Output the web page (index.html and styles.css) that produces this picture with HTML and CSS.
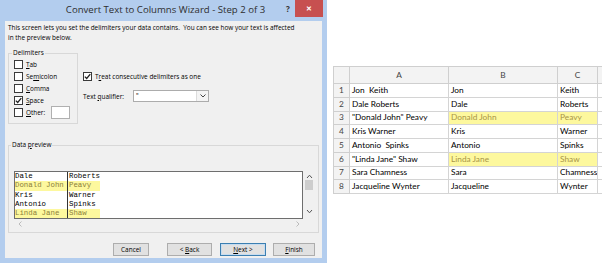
FILE: index.html
```html
<!DOCTYPE html>
<html lang="en">
  <head>
    <meta charset="UTF-8" />
    <title>Convert Text to Columns Wizard</title>
    <link rel="stylesheet" href="styles.css">
  </head>
  <body>
    <div class="page">
      <div class="dialog">
        <div class="titlebar">
          <span class="title">Convert Text to Columns Wizard - Step 2 of 3</span>
          <span class="help">?</span>
          <span class="close">&#x2715;</span>
        </div>

        <div class="body">
          <p class="intro">This screen lets you set the delimiters your data contains.&nbsp; You can see how your text is affected<br>in the preview below.</p>

          <div class="options">
            <fieldset class="delims">
              <legend>Delimiters</legend>
              <label class="check"><span class="box"></span><span><u>T</u>ab</span></label>
              <label class="check"><span class="box"></span><span>Se<u>m</u>icolon</span></label>
              <label class="check"><span class="box"></span><span><u>C</u>omma</span></label>
              <label class="check">
                <span class="box">
                  <svg width="7" height="7" viewBox="0 0 7 7"><path d="M0.8 3.6 L2.7 5.5 L6.3 1.2" fill="none" stroke="#222" stroke-width="1.3"/></svg>
                </span>
                <span><u>S</u>pace</span>
              </label>
              <label class="check other"><span class="box"></span><span><u>O</u>ther:</span><span class="other-input"></span></label>
            </fieldset>

            <div class="more">
              <label class="check">
                <span class="box">
                  <svg width="7" height="7" viewBox="0 0 7 7"><path d="M0.8 3.6 L2.7 5.5 L6.3 1.2" fill="none" stroke="#222" stroke-width="1.3"/></svg>
                </span>
                <span>T<u>r</u>eat consecutive delimiters as one</span>
              </label>
              <div class="qualifier">
                <span class="qual-label">Text <u>q</u>ualifier:</span>
                <div class="select">
                  <span class="select-value">"</span>
                  <span class="select-arrow">
                    <svg width="6" height="4" viewBox="0 0 6 4"><path d="M0.5 0.5 L3 3 L5.5 0.5" fill="none" stroke="#444" stroke-width="1"/></svg>
                  </span>
                </div>
              </div>
            </div>
          </div>

          <fieldset class="preview-group">
            <legend>Data <u>p</u>review</legend>
            <div class="preview">
              <div class="data">
                <div class="prow"><span class="c1">Dale</span><span class="c2">Roberts</span></div>
                <div class="prow hl"><span class="c1">Donald John</span><span class="c2">Peavy</span></div>
                <div class="prow"><span class="c1">Kris</span><span class="c2">Warner</span></div>
                <div class="prow"><span class="c1">Antonio</span><span class="c2">Spinks</span></div>
                <div class="prow hl"><span class="c1">Linda Jane</span><span class="c2">Shaw</span></div>
              </div>
              <div class="vscroll">
                <svg width="7" height="5" viewBox="0 0 7 5"><path d="M1 4 L3.5 1.2 L6 4" fill="none" stroke="#555" stroke-width="1"/></svg>
                <span class="thumb"></span>
                <svg width="7" height="5" viewBox="0 0 7 5"><path d="M1 1 L3.5 3.8 L6 1" fill="none" stroke="#555" stroke-width="1"/></svg>
              </div>
              <div class="hscroll">
                <svg width="4" height="6" viewBox="0 0 4 6"><path d="M3.5 0.5 L1 3 L3.5 5.5" fill="none" stroke="#bbb" stroke-width="1"/></svg>
                <svg width="4" height="6" viewBox="0 0 4 6"><path d="M0.5 0.5 L3 3 L0.5 5.5" fill="none" stroke="#bbb" stroke-width="1"/></svg>
              </div>
            </div>
          </fieldset>

          <div class="buttons">
            <button class="btn btn-cancel">Cancel</button>
            <button class="btn btn-back">&lt; <u>B</u>ack</button>
            <button class="btn btn-next"><u>N</u>ext &gt;</button>
            <button class="btn btn-finish"><u>F</u>inish</button>
          </div>
        </div>
      </div>

      <div class="sheet">
        <table>
          <colgroup>
            <col class="col-hdr" />
            <col class="col-a" />
            <col class="col-b" />
            <col class="col-c" />
            <col class="col-d" />
          </colgroup>
          <tr class="hdr-row">
            <th class="corner">
              <svg width="7" height="7" viewBox="0 0 7 7"><path d="M7 0 L7 7 L0 7 Z" fill="#b8b8b8"/></svg>
            </th>
            <th>A</th><th>B</th><th>C</th><th></th>
          </tr>
          <tr><th>1</th><td>Jon  Keith</td><td>Jon</td><td>Keith</td><td></td></tr>
          <tr><th>2</th><td>Dale Roberts</td><td>Dale</td><td>Roberts</td><td></td></tr>
          <tr><th>3</th><td>"Donald John" Peavy</td><td class="hl">Donald John</td><td class="hl">Peavy</td><td></td></tr>
          <tr><th>4</th><td>Kris Warner</td><td>Kris</td><td>Warner</td><td></td></tr>
          <tr><th>5</th><td>Antonio  Spinks</td><td>Antonio</td><td>Spinks</td><td></td></tr>
          <tr><th>6</th><td>"Linda Jane" Shaw</td><td class="hl">Linda Jane</td><td class="hl">Shaw</td><td></td></tr>
          <tr><th>7</th><td>Sara Chamness</td><td>Sara</td><td>Chamness</td><td></td></tr>
          <tr><th>8</th><td>Jacqueline Wynter</td><td>Jacqueline</td><td>Wynter</td><td></td></tr>
        </table>
      </div>
    </div>
  </body>
</html>
```

FILE: styles.css
```css
:root {
  --frame: #b3cdee;
  --face: #f0f0f0;
  --group-line: #d8d8d8;
  --grid-line: #d4d4d4;
  --yellow: #fdf89e;
}

body {
  margin: 0;
  background: #ffffff;
  overflow: hidden;
  font-family: "Open Sans", "Liberation Sans", sans-serif;
  color: #000;
}

.page {
  display: flex;
  align-items: flex-start;
}

/* Wizard dialog */
.dialog {
  width: 327px;
  height: 263px;
  box-sizing: border-box;
  padding: 0 5px 5px;
  background: var(--frame);
  display: flex;
  flex-direction: column;
  flex-shrink: 0;
}

.titlebar {
  height: 21px;
  display: flex;
  align-items: flex-start;
}

.title {
  flex: 1;
  padding-left: 45px;
  text-align: center;
  font-size: 9.6px;
  line-height: 20px;
  color: #2e2e2e;
  white-space: nowrap;
}

.help {
  width: 14px;
  text-align: center;
  font-size: 8px;
  font-weight: bold;
  line-height: 17px;
  color: #333;
}

.close {
  width: 28px;
  height: 17px;
  margin-right: -1px;
  background: #c75050;
  color: #fff;
  font-size: 7px;
  font-weight: bold;
  line-height: 17px;
  text-align: center;
}

.body {
  flex: 1;
  background: var(--face);
  padding-top: 2px;
  font-size: 6.45px;
}

.intro {
  margin: 0;
  padding: 0 3px;
  line-height: 10px;
  white-space: nowrap;
}

.options {
  display: flex;
  align-items: flex-start;
  margin-top: 5px;
  padding-left: 3px;
}

fieldset {
  margin: 0;
  border: 1px solid var(--group-line);
  min-width: 0;
}

legend {
  padding: 0 1px;
  line-height: 10px;
  font-size: 6.45px;
}

.delims {
  width: 70px;
  box-sizing: border-box;
  padding: 0 0 4px 3px;
}

.check {
  display: flex;
  align-items: center;
  gap: 3px;
  height: 12px;
  padding-left: 2px;
  white-space: nowrap;
}

.box {
  width: 9px;
  height: 9px;
  box-sizing: border-box;
  border: 1px solid #3a3a3a;
  background: #fff;
  display: flex;
  align-items: center;
  justify-content: center;
  flex-shrink: 0;
}

.check.other {
  height: 13px;
}

.other-input {
  width: 19px;
  height: 13px;
  box-sizing: border-box;
  margin-left: 3px;
  border: 1px solid #b0b0b0;
  background: #fff;
}

.more {
  margin-left: 5px;
  padding-top: 22px;
}

.more .check {
  padding-left: 0;
}

.qualifier {
  display: flex;
  align-items: center;
  margin-top: 8px;
}

.qual-label {
  width: 50px;
}

.select {
  width: 76px;
  height: 12px;
  box-sizing: border-box;
  border: 1px solid #acacac;
  background: #fff;
  display: flex;
}

.select-value {
  flex: 1;
  padding-left: 2px;
  line-height: 9px;
}

.select-arrow {
  width: 11px;
  border-left: 1px solid #dcdcdc;
  background: #f4f4f4;
  display: flex;
  align-items: center;
  justify-content: center;
}

/* Data preview */
.preview-group {
  margin: 16px 3px 0;
  padding: 0 3px 3px 5px;
}

.preview-group legend {
  margin-left: -3px;
}

.preview {
  margin-top: 21px;
  display: grid;
  grid-template-columns: 1fr 12px;
  grid-template-rows: 48px 10px;
}

.data {
  border: 1px solid #6e6e6e;
  background: #fff;
  overflow: hidden;
  font-family: "Liberation Mono", monospace;
  font-size: 7.4px;
}

.prow {
  display: flex;
  height: 9.25px;
  line-height: 9.25px;
  white-space: pre;
}

.c1 {
  width: 52px;
  border-right: 1px solid #333;
}

.c2 {
  width: 31px;
  padding-left: 1px;
}

.prow.hl .c1,
.prow.hl .c2 {
  background: var(--yellow);
  color: #8c7f3c;
}

.vscroll {
  display: flex;
  flex-direction: column;
  align-items: center;
  padding-top: 3px;
}

.thumb {
  width: 8px;
  height: 10px;
  margin: 1px 0 19px;
  background: #cdcdcd;
}

.hscroll {
  grid-column: 1 / span 2;
  display: flex;
  align-items: center;
  justify-content: space-between;
  padding: 0 15px 0 4px;
}

/* Button row */
.buttons {
  display: flex;
  justify-content: flex-end;
  gap: 8px;
  margin-top: 10px;
  padding-right: 7px;
}

.btn {
  height: 13px;
  padding: 0;
  box-sizing: border-box;
  border: 1px solid #adadad;
  background: #e1e1e1;
  font-family: inherit;
  font-size: 6.45px;
  color: #000;
}

.btn-cancel {
  width: 36px;
  margin-right: 10px;
}

.btn-back {
  width: 45px;
}

.btn-next {
  width: 46px;
  border-color: #3c7fb1;
  box-shadow: inset 0 0 0 1px #c6dcf0;
}

.btn-finish {
  width: 42px;
  margin-left: -1px;
}

/* Excel sheet */
.sheet {
  margin: 66px 0 0 6px;
}

table {
  border-collapse: collapse;
  table-layout: fixed;
  width: 270px;
  font-family: "Lato", "Liberation Sans", sans-serif;
  font-size: 8.3px;
}

.col-hdr { width: 16px; }
.col-a { width: 99px; }
.col-b { width: 109px; }
.col-c { width: 40px; }
.col-d { width: 6px; }

th,
td {
  height: 12.75px;
  padding: 0;
  border: 1px solid var(--grid-line);
  white-space: pre;
  overflow: hidden;
  line-height: 11px;
}

td {
  padding-left: 2px;
}

th {
  background: #f3f3f3;
  color: #444;
  font-weight: normal;
  text-align: center;
  border-color: #cfcfcf;
}

.hdr-row th {
  height: 16px;
}

.corner {
  text-align: right;
  vertical-align: bottom;
  line-height: 0;
}

.corner svg {
  margin: 0 1px 1px 0;
}

td.hl {
  background: var(--yellow);
  color: #a89547;
}
```
